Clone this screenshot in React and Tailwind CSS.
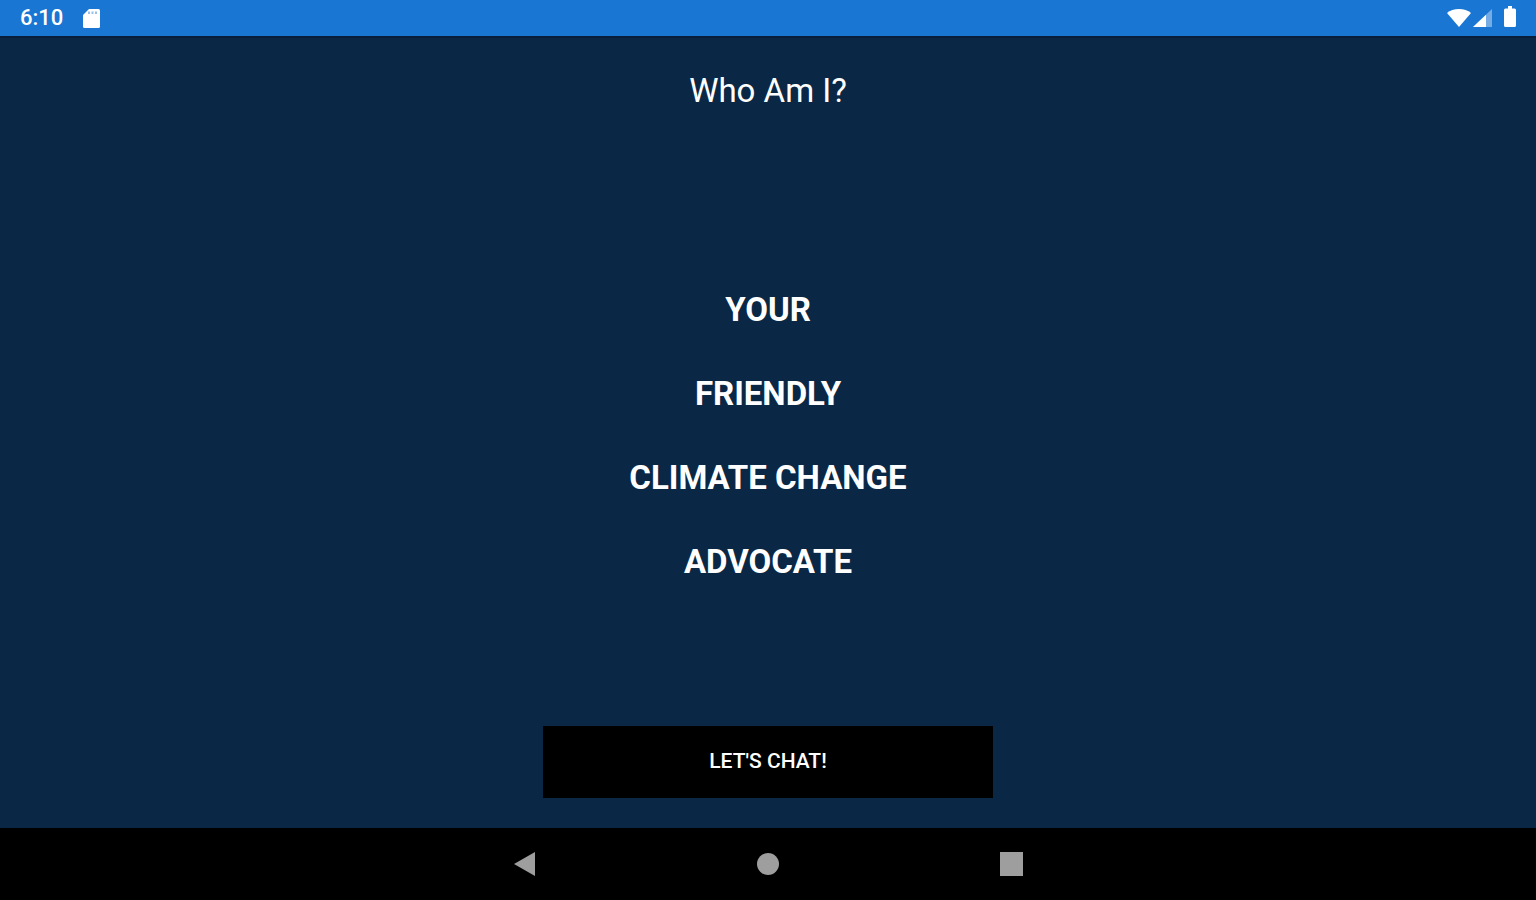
const INTRO_LINES = ['Your', 'Friendly', 'Climate Change', 'Advocate']

function StatusBar() {
  return (
    <header className="flex h-9 shrink-0 items-center justify-between bg-[#1976d2] px-5 text-white">
      <div className="flex items-center gap-5">
        <span className="text-[22px] leading-9 font-medium">6:10</span>
        {/* SD card */}
        <svg width="17" height="20" viewBox="0 0 17 20" fill="currentColor" aria-hidden="true">
          <path d="M6 1h9.500A1.500 1.500 0 0 1 17 2.500v16a1.500 1.500 0 0 1-1.500 1.500h-14A1.500 1.500 0 0 1 0 18.500V7z" />
          <path d="M5 3.500h2v2.500H5zM8.500 3.500h2v2.500h-2zM12 3.500h2v2.500h-2z" fill="#1976d2" opacity="0.45" />
        </svg>
      </div>

      <div className="flex items-center">
        {/* Wifi */}
        <svg width="24" height="20" viewBox="0 0 24 20" fill="currentColor" aria-hidden="true">
          <path d="M12 19 0 5C3 2.300 7.300 1 12 1s9 1.300 12 4z" />
        </svg>
        {/* Mobile signal */}
        <svg className="ml-0.5" width="19" height="20" viewBox="0 0 19 20" fill="currentColor" aria-hidden="true">
          <path d="M0 19 19 1v18z" opacity="0.4" />
          <path d="M0 19 13 6.700V19z" />
        </svg>
        {/* Battery */}
        <svg className="ml-3" width="12" height="24" viewBox="0 0 12 24" fill="currentColor" aria-hidden="true">
          <path d="M4 0h4v2.500h2.500A1.500 1.500 0 0 1 12 4v15.500a1.500 1.500 0 0 1-1.500 1.500h-9A1.500 1.500 0 0 1 0 19.500V4a1.500 1.500 0 0 1 1.500-1.500H4z" />
        </svg>
      </div>
    </header>
  )
}

function NavBar() {
  return (
    <nav className="flex h-18 shrink-0 items-center justify-center gap-[195px] bg-black text-[#9e9e9e]">
      <button type="button" aria-label="Back" className="flex size-12 items-center justify-center">
        <svg width="24" height="24" viewBox="0 0 24 24" fill="currentColor" aria-hidden="true">
          <path d="M1 12 22 0v24z" />
        </svg>
      </button>
      <button type="button" aria-label="Home" className="flex size-12 items-center justify-center">
        <svg width="24" height="24" viewBox="0 0 24 24" fill="currentColor" aria-hidden="true">
          <circle cx="12" cy="12" r="11" />
        </svg>
      </button>
      <button type="button" aria-label="Recent apps" className="flex size-12 items-center justify-center">
        <svg width="24" height="24" viewBox="0 0 24 24" fill="currentColor" aria-hidden="true">
          <rect x="1" width="23" height="24" />
        </svg>
      </button>
    </nav>
  )
}

export default function App() {
  return (
    <div className="flex min-h-screen flex-col bg-[#0a2845] font-['Roboto',sans-serif] text-white">
      <StatusBar />

      <main className="flex flex-1 flex-col items-center border-t-2 border-[#071f3a] px-6 pt-8 pb-[30px] text-center">
        <h1 className="text-[33px] leading-[42px]">Who Am I?</h1>

        {/* Intro lines */}
        <div className="flex flex-1 flex-col justify-center gap-[42px] pt-[34px]">
          {INTRO_LINES.map((line) => (
            <p key={line} className="text-[33px] leading-[42px] font-bold uppercase">{line}</p>
          ))}
        </div>

        <button
          type="button"
          className="h-18 w-full max-w-[450px] bg-black text-[21px] font-medium uppercase"
        >
          Let's chat!
        </button>
      </main>

      <NavBar />
    </div>
  )
}
